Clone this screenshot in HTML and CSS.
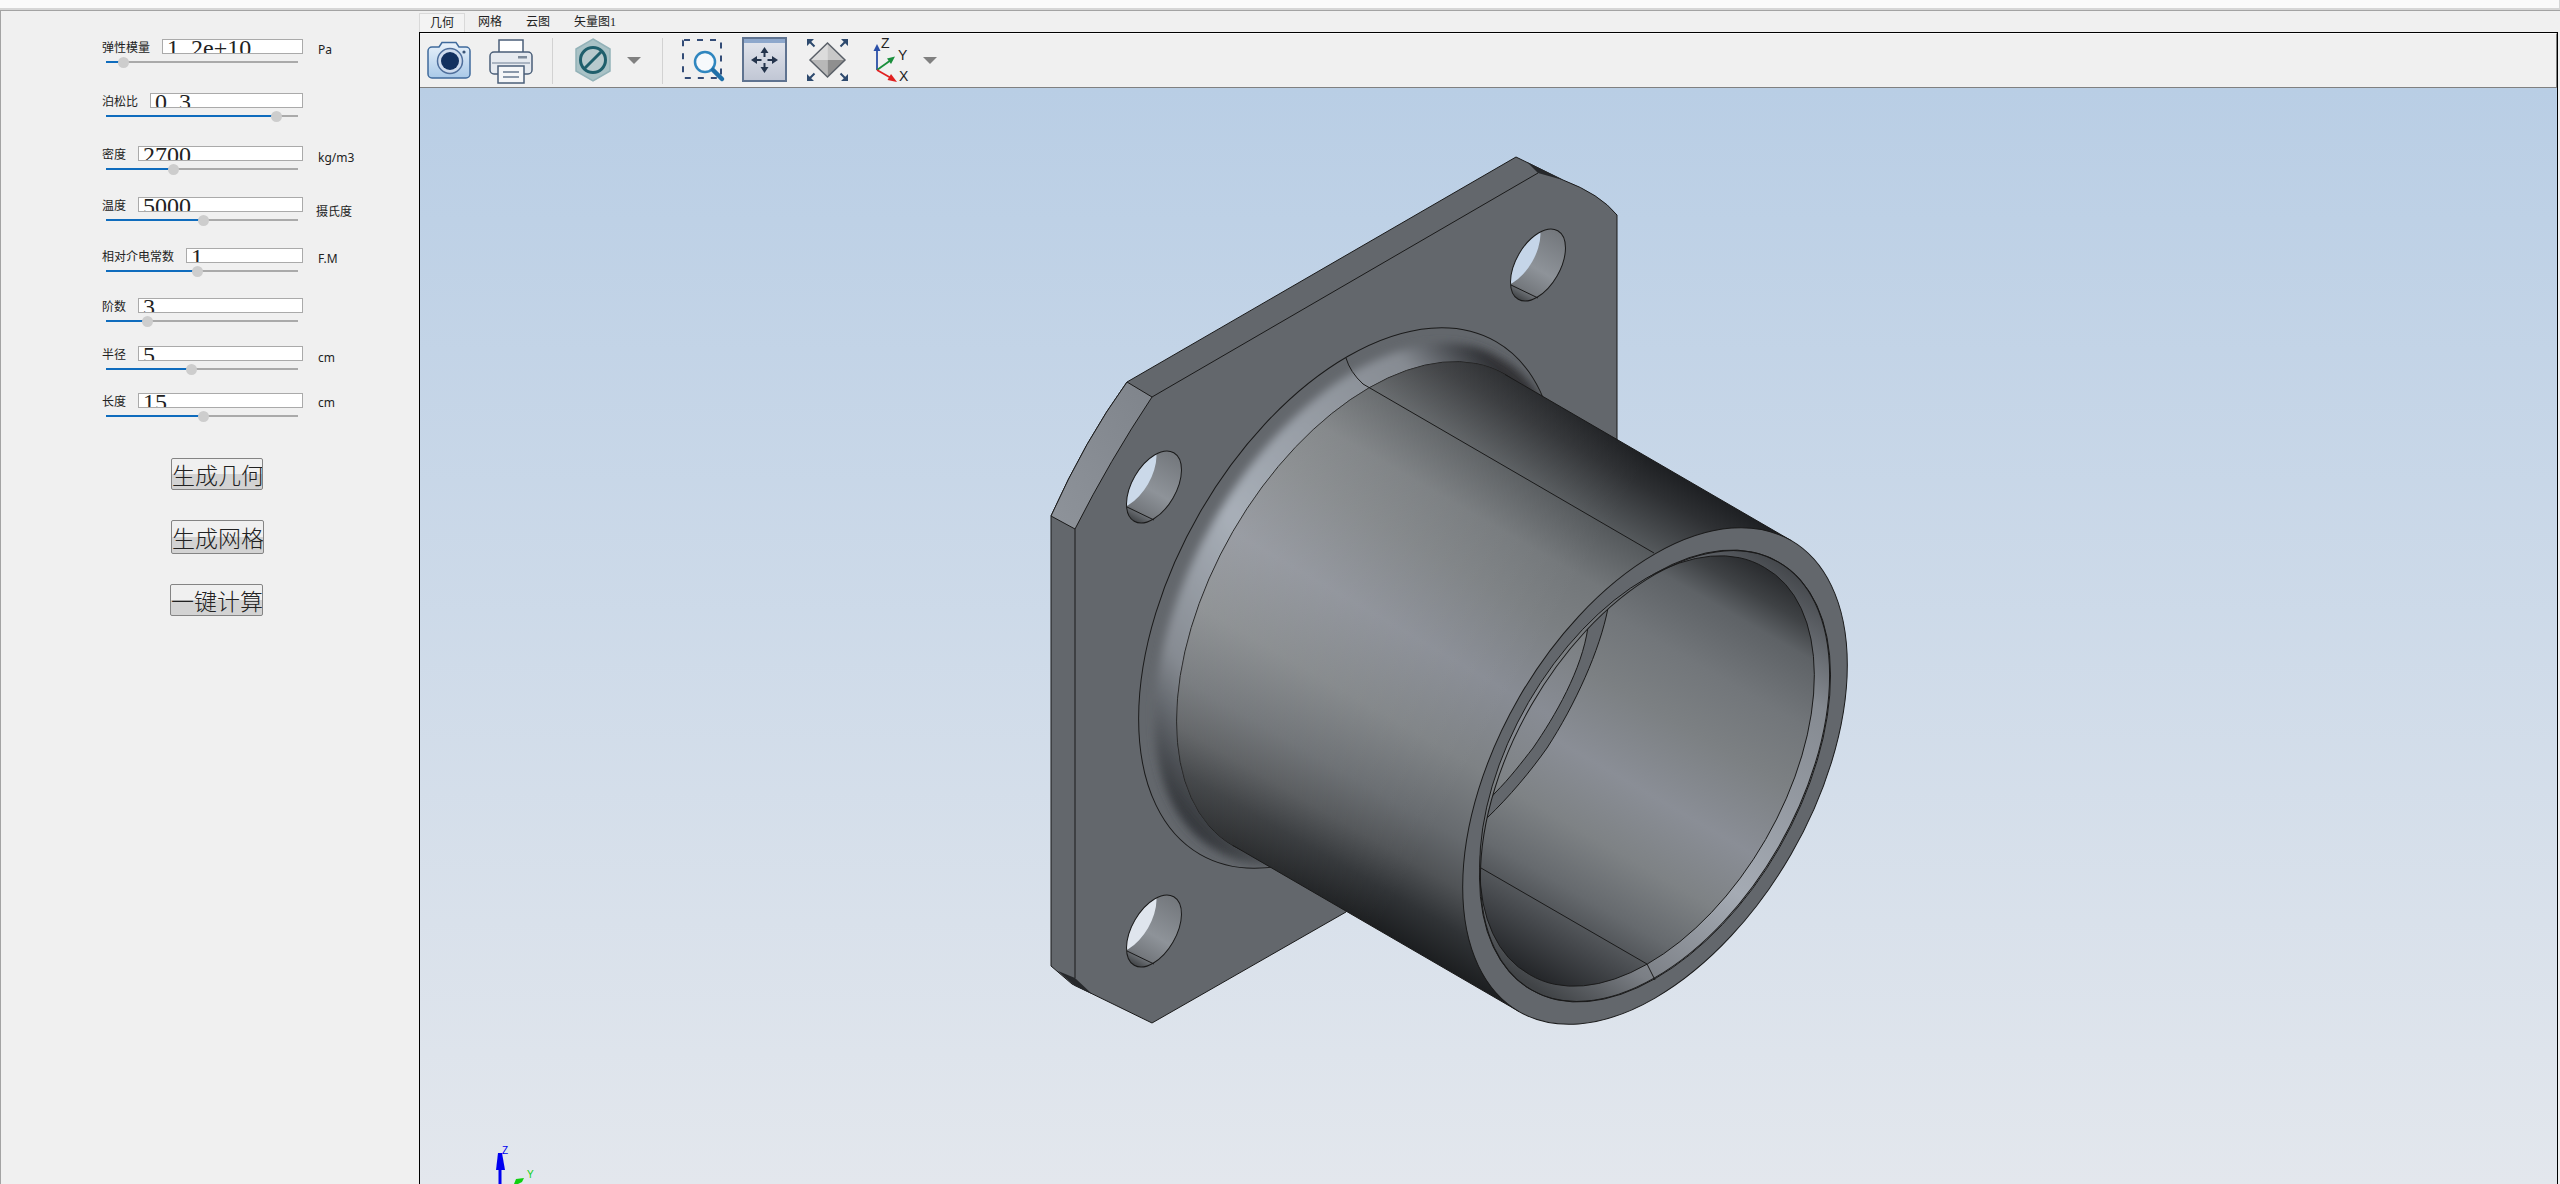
FILE: index.html
```html
<!DOCTYPE html>
<html lang="zh">
<head>
<meta charset="utf-8">
<title>几何</title>
<link rel="stylesheet" href="styles.css">
</head>
<body>
<div class="app">
  <div class="topstrip"></div>
  <div class="main">
    <aside class="sidebar">
      <div class="param">
        <div class="row"><span class="label">弹性模量</span><div class="field">1<span class="dot">.</span>2e+10</div><span class="unit u-pa">Pa</span></div>
        <div class="slider"><div class="fill" style="width:17px"></div><div class="thumb" style="left:17px"></div></div>
      </div>
      <div class="param">
        <div class="row"><span class="label">泊松比</span><div class="field">0<span class="dot">.</span>3</div></div>
        <div class="slider"><div class="fill" style="width:170px"></div><div class="thumb" style="left:170px"></div></div>
      </div>
      <div class="param">
        <div class="row"><span class="label">密度</span><div class="field">2700</div><span class="unit u-kg">kg/m3</span></div>
        <div class="slider"><div class="fill" style="width:67px"></div><div class="thumb" style="left:67px"></div></div>
      </div>
      <div class="param">
        <div class="row"><span class="label">温度</span><div class="field">5000</div><span class="unit u-c">摄氏度</span></div>
        <div class="slider"><div class="fill" style="width:97px"></div><div class="thumb" style="left:97px"></div></div>
      </div>
      <div class="param">
        <div class="row"><span class="label">相对介电常数</span><div class="field">1</div><span class="unit u-fm">F.M</span></div>
        <div class="slider"><div class="fill" style="width:91px"></div><div class="thumb" style="left:91px"></div></div>
      </div>
      <div class="param">
        <div class="row"><span class="label">阶数</span><div class="field">3</div></div>
        <div class="slider"><div class="fill" style="width:41px"></div><div class="thumb" style="left:41px"></div></div>
      </div>
      <div class="param">
        <div class="row"><span class="label">半径</span><div class="field">5</div><span class="unit u-cm1">cm</span></div>
        <div class="slider"><div class="fill" style="width:85px"></div><div class="thumb" style="left:85px"></div></div>
      </div>
      <div class="param">
        <div class="row"><span class="label">长度</span><div class="field">15</div><span class="unit u-cm2">cm</span></div>
        <div class="slider"><div class="fill" style="width:97px"></div><div class="thumb" style="left:97px"></div></div>
      </div>
      <div class="actions">
        <button class="btn btn-a">生成几何</button>
        <button class="btn btn-b">生成网格</button>
        <button class="btn btn-c">一键计算</button>
      </div>
    </aside>
    <section class="work">
      <nav class="tabs">
        <span class="tab tab-active">几何</span>
        <span class="tab tab-2">网格</span>
        <span class="tab tab-3">云图</span>
        <span class="tab tab-4">矢量图1</span>
      </nav>
      <div class="pane">
        <div class="toolbar">
          <svg class="tool t-camera" width="44" height="54" viewBox="0 0 44 54">
            <defs><linearGradient id="camG" x1="0" y1="0" x2="0" y2="1"><stop offset="0" stop-color="#eaf2fb"/><stop offset="1" stop-color="#a9c9e8"/></linearGradient></defs>
            <path d="M12 14l3-4.500h14l3 4.500h7a4 4 0 0 1 4 4v23a4 4 0 0 1-4 4H5a4 4 0 0 1-4-4V18a4 4 0 0 1 4-4z" fill="url(#camG)" stroke="#3f6a9c" stroke-width="1.500"/>
            <circle cx="23" cy="28" r="12.500" fill="#cfdcee" stroke="#4f6f9c" stroke-width="1.500"/>
            <circle cx="23" cy="28" r="9" fill="#12305f"/>
            <circle cx="37" cy="19" r="1.600" fill="#3a5578"/>
          </svg>
          <svg class="tool t-printer" width="44" height="54" viewBox="0 0 44 54">
            <rect x="10" y="7" width="24" height="14" fill="#fff" stroke="#4a5e78" stroke-width="1.500"/>
            <rect x="1" y="19" width="42" height="22" rx="4" fill="#e6eaf0" stroke="#4a5e78" stroke-width="1.500"/>
            <rect x="29" y="23" width="9" height="2.500" fill="#7d8a9a"/>
            <rect x="3" y="29" width="38" height="2" fill="#aab4c2"/>
            <rect x="9" y="33" width="26" height="17" fill="#f5f6f8" stroke="#4a5e78" stroke-width="1.500"/>
            <path d="M14 39h16M14 44h16" stroke="#8a98aa" stroke-width="2"/>
          </svg>
          <span class="sep s-1"></span>
          <svg class="tool t-hex" width="36" height="54" viewBox="0 0 36 54">
            <polygon points="18,6 35,16 35,38 18,48 1,38 1,16" fill="#a9c2c6" stroke="#93b2b8" stroke-width="1.500"/>
            <circle cx="18" cy="27" r="12.500" fill="#b8cacd" stroke="#1f5f6c" stroke-width="3"/>
            <path d="M9.500 35.500L26.500 18.500" stroke="#1f5f6c" stroke-width="3"/>
          </svg>
          <svg class="tool t-caret" width="14" height="54" viewBox="0 0 14 54"><polygon points="0,24 14,24 7,31" fill="#808080"/></svg>
          <span class="sep s-2"></span>
          <svg class="tool t-zoom" width="43" height="54" viewBox="0 0 43 54">
            <rect x="2" y="7" width="38" height="38" rx="1" fill="none" stroke="#334c77" stroke-width="2" stroke-dasharray="6 7"/>
            <circle cx="24" cy="29" r="10" fill="#f6f9fc" stroke="#2f86bf" stroke-width="2.500"/>
            <path d="M32 37L41 46" stroke="#1f6fa8" stroke-width="4.500" stroke-linecap="round"/>
          </svg>
          <svg class="tool t-fit" width="45" height="54" viewBox="0 0 45 54">
            <defs><linearGradient id="fitG" x1="0" y1="0" x2="0" y2="1"><stop offset="0" stop-color="#e4e7ee"/><stop offset="1" stop-color="#c0c6d4"/></linearGradient></defs>
            <rect x="1" y="5" width="43" height="43" fill="url(#fitG)" stroke="#5f7390" stroke-width="2"/>
            <rect x="2" y="6" width="41" height="4" fill="#8ea8cc"/>
            <path d="M22.500 18v6M22.500 30v6M13.500 27h6M25.500 27h6" stroke="#24344c" stroke-width="2"/>
            <path d="M22.500 14l-4 6h8zM22.500 40l-4-6h8zM9 27l6-4v8zM36 27l-6-4v8z" fill="#24344c"/>
          </svg>
          <svg class="tool t-diamond" width="43" height="54" viewBox="0 0 43 54">
            <polygon points="21.500,10 4,27 21.500,27" fill="#dcdcdc"/>
            <polygon points="21.500,10 39,27 21.500,27" fill="#c8c8c8"/>
            <polygon points="21.500,44 4,27 21.500,27" fill="#b8b8b8"/>
            <polygon points="21.500,44 39,27 21.500,27" fill="#8f8f8f"/>
            <polygon points="21.500,10 39,27 21.500,44 4,27" fill="none" stroke="#5a6068" stroke-width="1.500"/>
            <path d="M3 8L8.500 13.500M40 8L34.500 13.500M3 46L8.500 40.500M40 46L34.500 40.500" stroke="#2e4a6e" stroke-width="2"/>
            <path d="M1 6h7l-7 7zM42 6h-7l7 7zM1 48h7l-7-7zM42 48h-7l7-7z" fill="#2e4a6e"/>
          </svg>
          <svg class="tool t-axes" width="36" height="54" viewBox="0 0 36 54">
            <path d="M3 37V17" stroke="#2a4fa8" stroke-width="1.800"/>
            <polygon points="3,11 -0.500,18 6.500,18" fill="#2a4fa8"/>
            <path d="M3 37L17 27" stroke="#1a8f3c" stroke-width="1.800"/>
            <polygon points="21,23.500 13,25.500 17,31" fill="#1a8f3c"/>
            <path d="M3 37L17 45" stroke="#e02020" stroke-width="1.800"/>
            <polygon points="23,49 13.500,47 17,41" fill="#e02020"/>
            <text class="axis-letter" x="7" y="15">Z</text>
            <text class="axis-letter" x="24" y="27">Y</text>
            <text class="axis-letter" x="25" y="48">X</text>
          </svg>
          <svg class="tool t-caret2" width="14" height="54" viewBox="0 0 14 54"><polygon points="0,24 14,24 7,31" fill="#808080"/></svg>
        </div>
        <div class="viewport">
          <svg class="model" width="2137" height="1096" viewBox="420 88 2137 1096">
            <defs>
              <linearGradient id="tubeG" gradientUnits="userSpaceOnUse" x1="1791" y1="540.500" x2="1519" y2="1011.500">
                <stop offset="0" stop-color="#1e2023"/><stop offset=".05" stop-color="#2e3033"/><stop offset=".146" stop-color="#55595c"/><stop offset=".25" stop-color="#73777a"/><stop offset=".35" stop-color="#7b7f82"/><stop offset=".5" stop-color="#888c94"/><stop offset=".65" stop-color="#7e8285"/><stop offset=".78" stop-color="#666a6e"/><stop offset=".86" stop-color="#505356"/><stop offset=".93" stop-color="#303336"/><stop offset="1" stop-color="#1c1e20"/>
              </linearGradient>
              <linearGradient id="tubeSheen" gradientUnits="userSpaceOnUse" x1="1170" y1="600" x2="1470" y2="773">
                <stop offset="0" stop-color="#fff" stop-opacity=".16"/><stop offset="1" stop-color="#fff" stop-opacity="0"/>
              </linearGradient>
              <linearGradient id="boreG" gradientUnits="userSpaceOnUse" x1="1764.500" y1="567.500" x2="1529.500" y2="974.500">
                <stop offset="0" stop-color="#2a2c2f"/><stop offset=".06" stop-color="#3f4245"/><stop offset=".12" stop-color="#5e6266"/><stop offset=".25" stop-color="#72767a"/><stop offset=".38" stop-color="#7c8083"/><stop offset=".54" stop-color="#8a8e96"/><stop offset=".68" stop-color="#7e8285"/><stop offset=".8" stop-color="#666a6e"/><stop offset=".9" stop-color="#45484c"/><stop offset="1" stop-color="#242629"/>
              </linearGradient>
              <linearGradient id="ringG" gradientUnits="userSpaceOnUse" x1="1800" y1="520" x2="1480" y2="1000">
                <stop offset=".06" stop-color="#3c3f43"/><stop offset=".25" stop-color="#858a91"/><stop offset=".6" stop-color="#a5abb4"/><stop offset=".81" stop-color="#7b7f85"/><stop offset=".93" stop-color="#404346"/>
              </linearGradient>
              <linearGradient id="filletG" gradientUnits="userSpaceOnUse" x1="1497" y1="370" x2="1092" y2="726">
                <stop offset="0" stop-color="#303236"/><stop offset=".12" stop-color="#868b92"/><stop offset=".55" stop-color="#a8afb8"/><stop offset=".8" stop-color="#868b92"/><stop offset=".98" stop-color="#35383c"/>
              </linearGradient>
              <linearGradient id="chamferG" x1="1" y1="0" x2="0" y2="1">
                <stop offset="0" stop-color="#7f848b"/><stop offset="1" stop-color="#8e939a"/>
              </linearGradient>
              <linearGradient id="wallG" x1="0" y1="0" x2="0" y2="1">
                <stop offset="0" stop-color="#73777c"/><stop offset=".55" stop-color="#8e9399"/><stop offset=".85" stop-color="#74787d"/><stop offset="1" stop-color="#404346"/>
              </linearGradient>
              <filter id="soft" x="-10%" y="-10%" width="120%" height="120%"><feGaussianBlur stdDeviation="4"/></filter>
              <clipPath id="e1Clip"><ellipse cx="1348" cy="598" rx="171" ry="296" transform="rotate(30 1348 598)"/></clipPath>
              <clipPath id="ringClip"><ellipse cx="1655" cy="776" rx="142.500" ry="247" transform="rotate(30 1655 776)"/></clipPath>
              <clipPath id="holeClip"><ellipse rx="22" ry="39.600" transform="rotate(30)"/></clipPath>
              <g id="hole">
                <ellipse rx="22" ry="39.600" transform="rotate(30)" fill="url(#wallG)"/>
                <g clip-path="url(#holeClip)"><ellipse rx="22" ry="39.600" transform="translate(-25 -14) rotate(30)"/></g>
                <path d="M-27 20L0 33" class="edge"/>
                <ellipse rx="22" ry="39.600" transform="rotate(30)" class="edge"/>
              </g>
            </defs>

            <path class="face" d="M1127 382L1516 157L1563 180Q1600 194 1617 215V600L1346 912L1152 1023L1072 984L1051 966V516Q1085 440 1127 382Z"/>
            <path d="M1127 382L1152 397Q1110 460 1075 529L1051 516Q1085 440 1127 382Z" fill="url(#chamferG)" class="outlined"/>
            <path d="M1527 162L1563 180L1538 173Z" fill="#26282b"/>
            <path d="M1058 971L1075 978L1092 994L1075 986Z" fill="#26282b"/>
            <path class="edge" d="M1152 397L1538 173M1075 529V978"/>

            <use href="#hole" x="1538" y="265" fill="#c5d5e8"/>
            <use href="#hole" x="1154" y="487" fill="#cbd9e9"/>
            <use href="#hole" x="1154" y="931" fill="#dfe5ed"/>

            <ellipse class="face" cx="1348" cy="598" rx="171" ry="296" transform="rotate(30 1348 598)"/>
            <g clip-path="url(#e1Clip)"><path d="M1500 358.100A284 164 -60 1 0 1216 849.900A284 164 -60 1 0 1500 358.100Z" fill="url(#filletG)" filter="url(#soft)"/></g>
            <path d="M1505 374.400A272 157 -60 1 0 1233 845.600A272 157 -60 1 0 1505 374.400Z" fill="url(#tubeG)" class="outlined"/>
            <polygon points="1505,374.500 1791,540.500 1519,1011.500 1233,845.500" fill="url(#tubeG)"/>
            <path d="M1505 374.400L1791 540.500L1519 1011.500L1233 845.600A272 157 -60 1 1 1505 374.400Z" fill="url(#tubeSheen)"/>
            <path class="edge" d="M1505 374.500L1791 540.500M1233 845.500L1519 1011.500M1363 384L1654 553M1346 358Q1350 372 1363 384"/>

            <ellipse class="face" cx="1655" cy="776" rx="157" ry="272" transform="rotate(30 1655 776)"/>
            <path d="M1778.500 562.100A247 142.500 -60 1 0 1531.500 989.900A247 142.500 -60 1 0 1778.500 562.100Z" fill="url(#ringG)" class="outlined"/>
            <path d="M1764.500 567.500A235 135.500 -60 1 0 1529.500 974.500A235 135.500 -60 1 0 1764.500 567.500Z" fill="url(#boreG)" class="outlined"/>
            <g clip-path="url(#ringClip)">
              <path d="M1592 610L1588 627C1582 670 1555 716 1533 748C1522 762 1510 778 1495 793L1486 803L1430 720L1560 550Z" fill="url(#tubeG)"/>
              <path class="band" d="M1615 590L1608 608C1600 650 1575 705 1547 748C1530 772 1510 796 1487 818L1478 828L1486 803L1495 793C1510 778 1522 762 1533 748C1555 716 1582 670 1588 627L1592 610Z"/>
            </g>
            <ellipse cx="1655" cy="776" rx="142.500" ry="247" transform="rotate(30 1655 776)" class="edge"/>
            <path class="edge" d="M1481 868L1647 964L1655 980"/>

            <polygon points="498,1153 502,1153 505,1170 496,1170" fill="#0000f0"/>
            <rect x="498.500" y="1170" width="3" height="14" fill="#0000f0"/>
            <polygon points="514,1184 516,1179 524,1178 522,1182 518,1184" fill="#10d010"/>
            <text class="triad triad-z" x="502" y="1154">Z</text>
            <text class="triad triad-y" x="527" y="1178">Y</text>
          </svg>
        </div>
      </div>
    </section>
  </div>
</div>
</body>
</html>
```
FILE: styles.css
```css
* { box-sizing: border-box; }
html, body { margin: 0; padding: 0; height: 100%; overflow: hidden; }
body {
  background: #f0f0f0;
  color: #222;
  font-family: "Noto Sans", "Noto Sans CJK SC", sans-serif;
  font-size: 12px;
}
.app { width: 2560px; height: 1184px; display: flex; flex-direction: column; overflow: hidden; }

.topstrip {
  height: 10px;
  background: #fafafa;
  border-bottom: 2px solid #d6d6d6;
  border-right: 1px solid #d6d6d6;
}

.main {
  flex: 1;
  display: flex;
  min-height: 0;
  border-top: 1px solid #a3a3a3;
}

/* Left parameter panel */
.sidebar {
  width: 419px;
  flex: none;
  border-left: 1px solid #a3a3a3;
  padding: 28px 0 0 101px;
}
.param { width: 201px; }
.param:nth-child(2) { margin-top: 30px; }
.param:nth-child(3) { margin-top: 29px; }
.param:nth-child(4) { margin-top: 27px; }
.param:nth-child(5) { margin-top: 27px; }
.param:nth-child(6) { margin-top: 26px; }
.param:nth-child(7) { margin-top: 24px; }
.param:nth-child(8) { margin-top: 23px; }

.row { display: flex; height: 15px; }
.label {
  flex: none;
  margin-right: 12px;
  line-height: 15px;
  color: #222;
  font-family: "Noto Sans CJK SC", sans-serif;
}
.field {
  flex: 1;
  min-width: 0;
  height: 15px;
  border: 1px solid #aaa;
  background: #fff;
  overflow: hidden;
  padding-left: 4px;
  font-family: "Liberation Serif", serif;
  font-size: 24px;
  line-height: 16px;
  color: #222;
  white-space: nowrap;
}
.dot { letter-spacing: 6px; }
.unit {
  flex: none;
  width: 0;
  white-space: nowrap;
  line-height: 15px;
  color: #222;
}
.u-pa { margin: 3px -15px 0 15px; }
.u-kg { margin: 4px -15px 0 15px; }
.u-c { margin: 6px -13px 0 13px; font-family: "Noto Sans CJK SC", sans-serif; }
.u-fm { margin: 3px -15px 0 15px; }
.u-cm1 { margin: 4px -15px 0 15px; }
.u-cm2 { margin: 2px -15px 0 15px; }

.slider {
  position: relative;
  width: 192px;
  height: 2px;
  margin: 7px 0 0 4px;
  background: #aaa;
}
.fill { height: 2px; background: #0f6cbd; }
.thumb {
  position: absolute;
  top: -4.5px;
  width: 11px;
  height: 11px;
  margin-left: -5.5px;
  border-radius: 50%;
  background: #cdcdcd;
}

.actions { display: flex; flex-direction: column; align-items: flex-start; margin-top: 41px; }
.btn {
  display: block;
  padding: 0;
  overflow: hidden;
  white-space: nowrap;
  text-align: left;
  border: 1px solid #848484;
  border-radius: 2px;
  background: linear-gradient(#f0f0f0 0 50%, #d3d3d3 50% 100%);
  color: #222;
  font-family: "Noto Sans CJK SC", sans-serif;
  font-size: 23px;
  font-weight: 300;
  line-height: 30px;
}
.btn-a { width: 92px; height: 32px; margin-left: 69px; }
.btn-b { width: 93px; height: 34px; margin: 30px 0 0 69px; }
.btn-c { width: 93px; height: 32px; margin: 30px 0 0 68px; }

/* Right work area */
.work { flex: 1; min-width: 0; display: flex; flex-direction: column; margin-right: 2px; }
.tabs { display: flex; height: 19px; margin-top: 2px; flex: none; align-items: stretch; position: relative; }
.tab {
  font-family: "Liberation Serif", "Noto Sans CJK SC", serif;
  font-size: 12px;
  line-height: 19px;
  padding: 0 12px;
  color: #222;
  white-space: nowrap;
}
.tab-active {
  width: 46px;
  padding: 0 10px;
  border: 1px solid #d9d9d9;
  border-bottom: none;
  line-height: 18px;
  background: #f3f3f3;
}
.tab-2 { padding-left: 13px; }

.pane { flex: 1; min-height: 0; display: flex; flex-direction: column; border: 1px solid #000; border-bottom: none; }
.toolbar {
  flex: none;
  height: 55px;
  display: flex;
  align-items: flex-start;
  background: #f0f0f0;
  border-top: 1px solid #fafafa;
  border-bottom: 1px solid #808080;
  border-right: 1px solid #808080;
  overflow: hidden;
}
.tool { flex: none; display: block; overflow: visible; margin-top: -1px; }
.t-camera { margin-left: 7px; }
.t-printer { margin-left: 18px; }
.sep { flex: none; width: 1px; height: 46px; margin-top: 4px; background: #d2d2d2; }
.s-1 { margin-left: 19px; }
.t-hex { margin-left: 22px; }
.t-caret { margin-left: 16px; }
.s-2 { margin-left: 21px; }
.t-zoom { margin-left: 18px; }
.t-fit { margin-left: 18px; }
.t-diamond { margin-left: 19px; }
.t-axes { margin-left: 25px; }
.t-caret2 { margin-left: 13px; }
.axis-letter { font-family: "Liberation Sans", sans-serif; font-size: 14px; fill: #222; }

.viewport {
  flex: 1;
  min-height: 0;
  overflow: hidden;
  background: linear-gradient(#b9cee5, #e3e7ed);
}
.model { display: block; }
.face { fill: #63676c; stroke: #1a1a1a; stroke-width: 1; }
.band { fill: #63676c; stroke: #1a1a1a; stroke-width: 1; }
.outlined { stroke: #1a1a1a; stroke-width: 1; }
.edge { fill: none; stroke: #1a1a1a; stroke-width: 1; }
.triad { font-family: "Liberation Sans", sans-serif; font-size: 10px; }
.triad-z { fill: #0000f0; }
.triad-y { fill: #10d010; }
```
